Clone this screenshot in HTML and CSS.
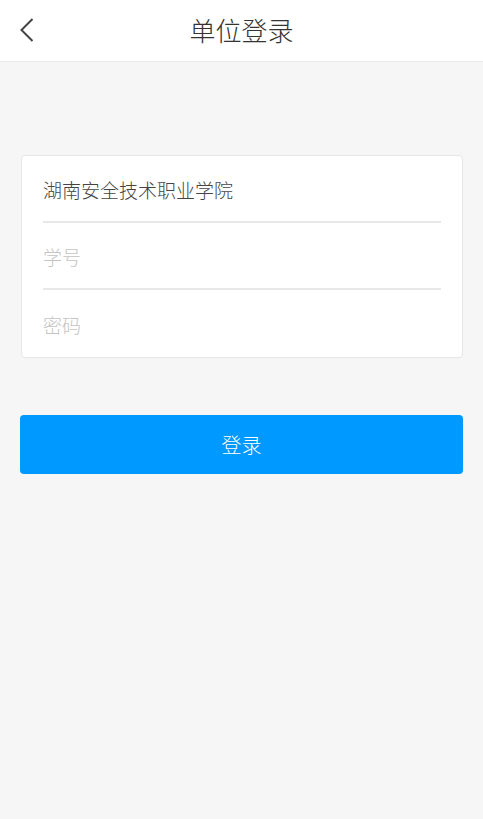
FILE: index.html
```html
<!DOCTYPE html>
<html lang="zh-CN">
<head>
  <meta charset="UTF-8" />
  <meta name="viewport" content="width=device-width, initial-scale=1.0" />
  <title>单位登录</title>
  <link rel="stylesheet" href="styles.css">
</head>
<body>
  <header class="topbar">
    <a class="back" href="#">
      <svg width="14" height="24" viewBox="0 0 14 24"><path d="M12.5 1 L1.5 12 L12.5 23" fill="none" stroke="#444" stroke-width="2"/></svg>
    </a>
    <h1>单位登录</h1>
  </header>

  <main class="content">
    <div class="form-card">
      <div class="row">
        <input type="text" value="湖南安全技术职业学院" />
      </div>
      <div class="row">
        <input type="text" placeholder="学号" />
      </div>
      <div class="row">
        <input type="password" placeholder="密码" />
      </div>
    </div>

    <button class="login-btn">登录</button>
  </main>
</body>
</html>
```

FILE: styles.css
```css
* {
  margin: 0;
  padding: 0;
  box-sizing: border-box;
}

body {
  font-family: "Noto Sans CJK SC", "Noto Sans", sans-serif;
  background-color: #f6f6f6;
  color: #333;
  width: 483px;
  min-height: 819px;
}

.topbar {
  height: 62px;
  background: #fff;
  border-bottom: 1px solid #ececec;
  display: flex;
  align-items: center;
  justify-content: center;
  position: relative;
}

.topbar h1 {
  font-size: 26px;
  font-weight: 300;
  color: #333;
  line-height: 1;
  margin-top: -1px;
}

.back {
  position: absolute;
  left: 20px;
  top: 18px;
  display: block;
  width: 14px;
  height: 24px;
}

.back svg {
  display: block;
}

.content {
  padding: 93px 20px 0 20px;
}

.form-card {
  margin-left: 1px;
  background: #fff;
  border: 1px solid #e6e6e6;
  border-radius: 4px;
  padding: 0 21px;
}

.row {
  height: 67px;
  display: flex;
  align-items: center;
  border-bottom: 2px solid #e8e8e8;
}

.row:last-child {
  border-bottom: none;
}

.row input {
  width: 100%;
  border: none;
  outline: none;
  background: transparent;
  font-family: inherit;
  font-size: 19px;
  font-weight: 300;
  color: #444;
  margin-top: 1px;
}

.row input::placeholder {
  color: #c4c4c4;
}

.login-btn {
  display: block;
  width: 443px;
  height: 59px;
  margin-top: 57px;
  background-color: #0099ff;
  color: #fff;
  border: none;
  border-radius: 4px;
  font-family: inherit;
  font-size: 20px;
  font-weight: 300;
  cursor: pointer;
}
```
